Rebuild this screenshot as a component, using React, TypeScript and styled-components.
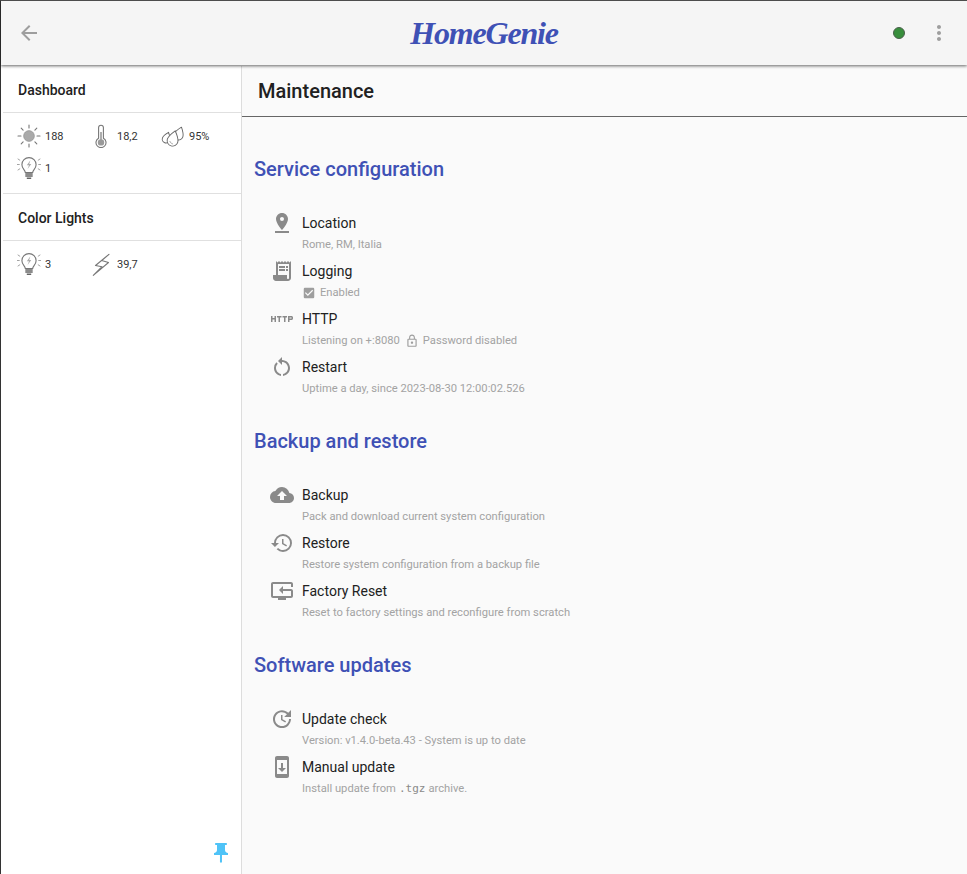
import React from "react";
import styled, { createGlobalStyle } from "styled-components";
import {
  MdArrowBack,
  MdMoreVert,
  MdPinDrop,
  MdReceiptLong,
  MdHttp,
  MdRestartAlt,
  MdCloudUpload,
  MdHistory,
  MdResetTv,
  MdUpdate,
  MdSystemUpdate,
  MdPushPin,
  MdCheckBox,
  MdLockOutline,
} from "react-icons/md";

const GlobalStyle = createGlobalStyle`
  html, body {
    margin: 0;
    padding: 0;
    height: 100%;
    overflow: hidden;
    font-family: Roboto, "Liberation Sans", sans-serif;
    background: #fafafa;
  }
`;

const SunIcon = () => (
  <svg width="24" height="24" viewBox="0 0 24 24">
    <circle cx="12" cy="12" r="5.4" fill="#aaa" stroke="#8a8a8a" strokeWidth="0.6" />
    <g stroke="#777" strokeWidth="1.1" strokeLinecap="round">
      <path d="M12 1v3M12 20v3M1 12h3M20 12h3M4.2 4.2l1.9 1.9M17.9 17.9l1.9 1.9M4.2 19.8l1.9-1.9M17.9 6.1l1.9-1.9" />
    </g>
  </svg>
);

const ThermometerIcon = () => (
  <svg width="24" height="24" viewBox="0 0 24 24">
    <path
      d="M9.6 14.2V3.6a2.4 2.4 0 0 1 4.8 0v10.6a5 5 0 1 1-4.8 0z"
      fill="#fff"
      stroke="#777"
      strokeWidth="1.1"
    />
    <circle cx="12" cy="18.4" r="3.2" fill="#999" />
    <rect x="11.2" y="8" width="1.6" height="8" fill="#999" />
  </svg>
);

const DROP = "M0-5C2-2.500 3.200-1 3.200 1a3.200 3.200 0 0 1-6.400 0C-3.200-1-2-2.500 0-5z";

const DropsIcon = () => (
  <svg width="24" height="24" viewBox="0 0 24 24">
    <g fill="#fff" stroke="#666" strokeLinejoin="round">
      <path d={DROP} strokeWidth="0.8" transform="translate(5.500 14) rotate(20) scale(1.200)" />
      <path d={DROP} strokeWidth="0.65" transform="translate(18 10) rotate(20) scale(1.450)" />
      <path d={DROP} strokeWidth="0.55" transform="translate(12 15) rotate(15) scale(1.700)" />
    </g>
    <path d="M8.800 17c.4 1.500 1.500 2.600 3.200 3" fill="none" stroke="#999" strokeWidth="0.8" />
  </svg>
);

const BulbIcon = () => (
  <svg width="24" height="24" viewBox="0 0 24 24">
    <path
      d="M8.300 16.500c0-2.400-3.400-3.800-3.400-7.800a7.100 7.100 0 0 1 14.200 0c0 4-3.400 5.400-3.400 7.800z"
      fill="#fff"
      stroke="#777"
      strokeWidth="1.100"
    />
    <path d="M13.400 4.300L9.800 9.300h2.200l-1.400 3.800L14.300 8h-2.100z" fill="#aaa" />
    <path d="M8.300 18h7.400M8.300 20h7.400M9.800 22.300h4.400" stroke="#666" strokeWidth="1.500" />
    <g stroke="#999" strokeWidth="0.9" strokeLinecap="round">
      <path d="M0.300 8.500h2M21.700 8.500h2M1 3l1.800 1.200M23 3l-1.800 1.200M1 14l1.800-1.200M23 14l-1.800-1.200" />
    </g>
  </svg>
);

const BoltIcon = () => (
  <svg width="24" height="24" viewBox="0 0 24 24">
    <path
      d="M20 2.300L6.500 13.500l6.500 1.200L4.300 23.300 19.500 10.500l-6.800-2z"
      fill="#fff"
      stroke="#777"
      strokeWidth="1.100"
      strokeLinejoin="round"
    />
  </svg>
);

const Page = styled.div`
  height: 100vh;
  display: flex;
  flex-direction: column;
  border-top: 1px solid #555;
  border-left: 1px solid #333;
  box-sizing: border-box;
`;

const TopBar = styled.header`
  position: relative;
  z-index: 2;
  height: 64px;
  flex: none;
  display: flex;
  align-items: center;
  justify-content: space-between;
  padding: 0 16px;
  background: #f5f5f5;
  box-shadow: 0 1px 3px rgba(0, 0, 0, 0.6);
  color: #9e9e9e;
`;

const Logo = styled.div`
  font-family: "Liberation Serif", serif;
  font-style: italic;
  font-weight: 700;
  font-size: 32px;
  letter-spacing: -1.2px;
  color: #3f51b5;
`;

const BarSide = styled.div<{ $right?: boolean }>`
  width: 64px;
  display: flex;
  align-items: center;
  justify-content: ${(p) => (p.$right ? "flex-end" : "flex-start")};
  gap: 22px;

  svg {
    flex: none;
  }
`;

const StatusDot = styled.span`
  width: 12px;
  height: 12px;
  border-radius: 50%;
  background: #388e3c;
  border: 1px solid #4a5f4b;
  box-sizing: border-box;
  flex: none;
`;

const Body = styled.div`
  flex: 1;
  display: flex;
  min-height: 0;
  margin-top: 1px;
`;

const Sidebar = styled.aside`
  width: 241px;
  flex: none;
  box-sizing: border-box;
  padding-left: 2px;
  background: #fff;
  border-right: 1px solid #ddd;
  display: flex;
  flex-direction: column;
`;

const CardTitle = styled.div`
  height: 46px;
  line-height: 48px;
  padding-left: 15px;
  font-size: 14px;
  font-weight: 500;
  color: #212121;
  border-bottom: 1px solid #e0e0e0;
`;

const Widgets = styled.div<{ $last?: boolean }>`
  display: flex;
  flex-wrap: wrap;
  padding: 7px 0 9px 14px;
  border-bottom: ${(p) => (p.$last ? "none" : "1px solid #e0e0e0")};
`;

const Widget = styled.div`
  width: 72px;
  height: 32px;
  display: flex;
  align-items: center;
  gap: 4px;
  font-size: 11px;
  color: #333;
`;

const PinButton = styled.div`
  margin-top: auto;
  align-self: flex-end;
  padding: 0 8px 9px 0;
  color: #4fc3f7;
  display: flex;
`;

const Main = styled.main`
  flex: 1;
  background: #fafafa;
  min-width: 0;
`;

const PageTitle = styled.h1`
  margin: 0;
  height: 50px;
  line-height: 50px;
  padding-left: 16px;
  font-size: 20px;
  font-weight: 500;
  color: #212121;
  border-bottom: 1px solid #666;
`;

const Content = styled.div`
  padding: 40px 12px 0;
`;

const Section = styled.section`
  margin-bottom: 26px;
`;

const SectionTitle = styled.h2`
  margin: 0 0 30px;
  height: 24px;
  line-height: 24px;
  font-size: 20px;
  font-weight: 500;
  color: #3f51b5;
`;

const Item = styled.div`
  height: 48px;
  display: flex;
  gap: 8px;
  padding-left: 16px;
`;

const ItemIcon = styled.div`
  width: 24px;
  height: 24px;
  flex: none;
  color: #8a8a8a;
  display: flex;
  align-items: center;
  justify-content: center;
`;

const ItemText = styled.div`
  padding-top: 2px;
`;

const ItemTitle = styled.div`
  font-size: 14px;
  line-height: 20px;
  color: #212121;
`;

const ItemSub = styled.div`
  margin-top: 4px;
  font-size: 11.2px;
  line-height: 16px;
  color: #a3a3a3;
  display: flex;
  align-items: center;
`;

const InlineIcon = styled.span<{ $margin?: string }>`
  display: inline-flex;
  color: #9e9e9e;
  margin: ${(p) => p.$margin || "0"};
`;

const Code = styled.code`
  font-family: "DejaVu Sans Mono", monospace;
  font-size: 11px;
  margin: 0 3px;
  color: #8a8a8a;
  white-space: pre;
`;

const App: React.FC = () => {
  return (
    <>
      <GlobalStyle />
      <Page>
        <TopBar>
          <BarSide>
            <MdArrowBack size={24} />
          </BarSide>
          <Logo>HomeGenie</Logo>
          <BarSide $right>
            <StatusDot />
            <MdMoreVert size={24} />
          </BarSide>
        </TopBar>
        <Body>
          <Sidebar>
            <CardTitle>Dashboard</CardTitle>
            <Widgets>
              <Widget><SunIcon />188</Widget>
              <Widget><ThermometerIcon />18,2</Widget>
              <Widget><DropsIcon />95%</Widget>
              <Widget><BulbIcon />1</Widget>
            </Widgets>
            <CardTitle>Color Lights</CardTitle>
            <Widgets $last>
              <Widget><BulbIcon />3</Widget>
              <Widget><BoltIcon />39,7</Widget>
            </Widgets>
            <PinButton>
              <MdPushPin size={24} />
            </PinButton>
          </Sidebar>
          <Main>
            <PageTitle>Maintenance</PageTitle>
            <Content>
              <Section>
                <SectionTitle>Service configuration</SectionTitle>
                <Item>
                  <ItemIcon><MdPinDrop size={24} /></ItemIcon>
                  <ItemText>
                    <ItemTitle>Location</ItemTitle>
                    <ItemSub>Rome, RM, Italia</ItemSub>
                  </ItemText>
                </Item>
                <Item>
                  <ItemIcon><MdReceiptLong size={24} /></ItemIcon>
                  <ItemText>
                    <ItemTitle>Logging</ItemTitle>
                    <ItemSub>
                      <InlineIcon $margin="0 4px 0 0"><MdCheckBox size={14} /></InlineIcon>
                      Enabled
                    </ItemSub>
                  </ItemText>
                </Item>
                <Item>
                  <ItemIcon><MdHttp size={24} /></ItemIcon>
                  <ItemText>
                    <ItemTitle>HTTP</ItemTitle>
                    <ItemSub>
                      Listening on +:8080
                      <InlineIcon $margin="0 4px 0 5px"><MdLockOutline size={14} /></InlineIcon>
                      Password disabled
                    </ItemSub>
                  </ItemText>
                </Item>
                <Item>
                  <ItemIcon><MdRestartAlt size={24} /></ItemIcon>
                  <ItemText>
                    <ItemTitle>Restart</ItemTitle>
                    <ItemSub>Uptime a day, since 2023-08-30 12:00:02.526</ItemSub>
                  </ItemText>
                </Item>
              </Section>
              <Section>
                <SectionTitle>Backup and restore</SectionTitle>
                <Item>
                  <ItemIcon><MdCloudUpload size={26} /></ItemIcon>
                  <ItemText>
                    <ItemTitle>Backup</ItemTitle>
                    <ItemSub>Pack and download current system configuration</ItemSub>
                  </ItemText>
                </Item>
                <Item>
                  <ItemIcon><MdHistory size={24} /></ItemIcon>
                  <ItemText>
                    <ItemTitle>Restore</ItemTitle>
                    <ItemSub>Restore system configuration from a backup file</ItemSub>
                  </ItemText>
                </Item>
                <Item>
                  <ItemIcon><MdResetTv size={24} /></ItemIcon>
                  <ItemText>
                    <ItemTitle>Factory Reset</ItemTitle>
                    <ItemSub>Reset to factory settings and reconfigure from scratch</ItemSub>
                  </ItemText>
                </Item>
              </Section>
              <Section>
                <SectionTitle>Software updates</SectionTitle>
                <Item>
                  <ItemIcon><MdUpdate size={24} /></ItemIcon>
                  <ItemText>
                    <ItemTitle>Update check</ItemTitle>
                    <ItemSub>Version: v1.4.0-beta.43 - System is up to date</ItemSub>
                  </ItemText>
                </Item>
                <Item>
                  <ItemIcon><MdSystemUpdate size={24} /></ItemIcon>
                  <ItemText>
                    <ItemTitle>Manual update</ItemTitle>
                    <ItemSub>
                      Install update from<Code>.tgz</Code>archive.
                    </ItemSub>
                  </ItemText>
                </Item>
              </Section>
            </Content>
          </Main>
        </Body>
      </Page>
    </>
  );
};

export default App;
